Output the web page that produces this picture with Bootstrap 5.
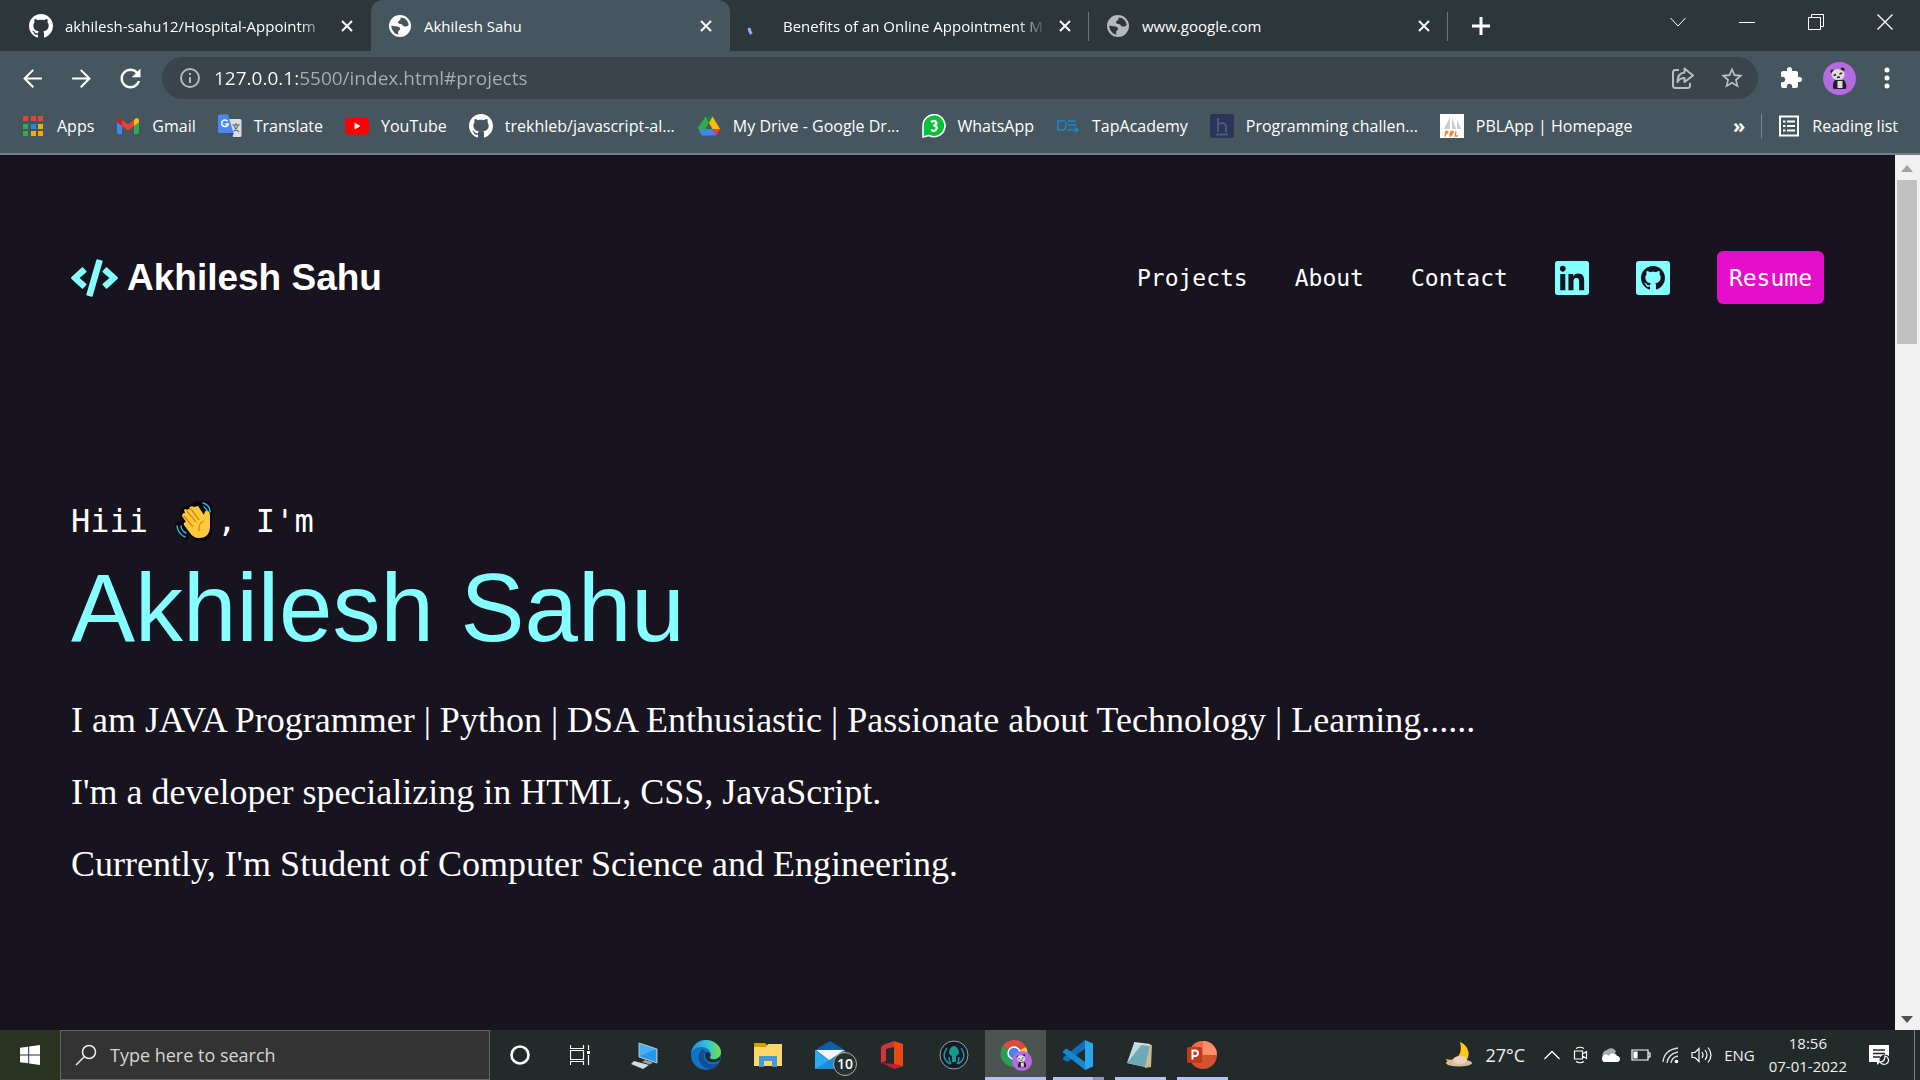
<!DOCTYPE html>
<html lang="en">
<head>
<meta charset="utf-8">
<meta name="viewport" content="width=device-width, initial-scale=1">
<title>Akhilesh Sahu</title>
<link href="https://cdn.jsdelivr.net/npm/bootstrap@5.3.0/dist/css/bootstrap.min.css" rel="stylesheet">
<style>
body{background:#17131f;font-family:"Open Sans","Noto Sans",sans-serif;font-size:15px;line-height:20px;color:#fff;overflow:hidden}
svg{display:block;flex:none}
a{color:inherit;text-decoration:none}
button{background:none;border:0;padding:0;color:inherit;font:inherit}
.tabstrip{background:#2c363b;height:51px;padding-left:12px}
.tab-item{flex:0 1 359px;min-width:0;padding:0 18px 0 17px;gap:12px;height:51px;position:relative}
.tab-item.current{background:#46565f;border-radius:12px 12px 0 0}
.tab-item.ruled::after{content:"";position:absolute;right:0;top:12px;height:29px;width:1px;background:#6c777d}
.tab-title{flex:1 1 0;overflow:hidden;white-space:nowrap}
.tab-title.faded{-webkit-mask-image:linear-gradient(90deg,#000 calc(100% - 30px),transparent);mask-image:linear-gradient(90deg,#000 calc(100% - 30px),transparent)}
.win-controls{gap:53px;padding-right:27px;height:44px}
.toolbar{background:#46565f;padding:6px 21px 6px 20px}
.nav-keys{gap:24px;padding-right:19px}
.omnibox{background:#39444b;border-radius:21px;height:42px;padding:0 13px 0 16px;gap:12px}
.address{flex:1 1 0;min-width:0;border:0;outline:0;padding:0;font-size:19px;line-height:28px;color:transparent;background:linear-gradient(90deg,#fff 84px,#a9afb3 84px);-webkit-background-clip:text;background-clip:text}
.tool-end{gap:19px;padding-left:22px}
.bookmarks{background:#46565f;height:50px;padding:0 22px 6px 21px;border-bottom:2px solid #727e84;font-size:16px}
.mark-item{gap:12px;white-space:nowrap}
.mark-list{gap:22px}
.rule-v{width:1px;height:24px;background:#7d888e}
.page-view{padding:96px 71px 0}
.mono-text{font-family:"DejaVu Sans Mono","Liberation Mono",monospace}
.site-name{font:bold 37px/44px "Liberation Sans",Arial,sans-serif;gap:9px}
.site-links{font-size:23px;line-height:29px;gap:47px}
.text-link{padding-top:2px}
.resume-btn,.resume-btn:hover{background:#e30fcb;color:#fff;border:0;border-radius:6px;padding:13px 12px 11px;font-size:23px;line-height:29px}
.hero{padding-top:193px}
.greeting{font-size:32px;line-height:48px;margin:0}
.hero-name{font:400 96px/110px "Liberation Sans",Arial,sans-serif;color:#85ffff;margin:8px 0 36px}
.hero p.intro{font:36px/42px "Liberation Serif","Times New Roman",serif;margin:0 0 30px}
.scroller{width:25px;background:#f1f1f1;padding:10px 3px 7px 2px}
.scroll-thumb{background:#c1c1c1;height:164px;width:100%;margin-top:8px}
.taskbar{background:#222b29;height:50px}
.start-btn{width:60px;height:50px;background:#2a3222}
.search-box{width:430px;height:50px;background:#333;border:1px solid #666;padding:0 14px;gap:13px}
.search-box input{background:none;border:0;outline:0;padding:0;color:#d5d5d5;font-size:18px;line-height:26px;flex:1 1 0;min-width:0}
.search-box input::placeholder{color:#d5d5d5;opacity:1}
.pinned{margin-left:3px}
.task-btn{width:62px;height:50px;position:relative}
.task-btn.sys-btn{width:60px}
.task-btn.open-app::after{content:"";position:absolute;left:6px;right:5px;bottom:0;height:3px;background:#b0c4f8}
.task-btn.front-app::before{content:"";position:absolute;inset:0 1px 0 0;background:#4b5351}
.task-btn.front-app::after{left:0;right:1px}
.task-btn.stacked::after{background:linear-gradient(90deg,#b0c4f8 40px,#8a97bb 40px)}
.task-btn svg{position:relative}
.mail-count{position:absolute;left:34px;top:22px;width:24px;height:24px;border:1px solid #aaa;border-radius:50%;background:#26302e;font-size:14px;font-weight:600;line-height:22px}
.tray{gap:11px;color:#f0f0f0}
.tray .temp{font-size:18px}
.more-icons{margin:0 2px 0 8px}
.clock{line-height:23px;text-align:center;margin:0 11px 0 3px}
.notices{margin-right:12px}
.show-desk{width:6px;height:50px;border-left:1px solid #7b8280}
</style>
<script src="https://cdn.jsdelivr.net/npm/bootstrap@5.3.0/dist/js/bootstrap.bundle.min.js" defer></script>
</head>
<body class="d-flex flex-column vh-100">
<svg width="0" height="0" class="position-absolute" aria-hidden="true">
<defs>
<symbol id="octo" viewBox="0 0 16 16"><path d="M8 0C3.58 0 0 3.58 0 8c0 3.54 2.29 6.53 5.47 7.59.4.07.55-.17.55-.38 0-.19-.01-.82-.01-1.49-2.01.37-2.53-.49-2.69-.94-.09-.23-.48-.94-.82-1.13-.28-.15-.68-.52-.01-.53.63-.01 1.08.58 1.23.82.72 1.21 1.87.87 2.33.66.07-.52.28-.87.51-1.07-1.78-.2-3.64-.89-3.64-3.95 0-.87.31-1.59.82-2.15-.08-.2-.36-1.02.08-2.12 0 0 .67-.21 2.2.82.64-.18 1.32-.27 2-.27s1.36.09 2 .27c1.53-1.04 2.2-.82 2.2-.82.44 1.1.16 1.92.08 2.12.51.56.82 1.27.82 2.15 0 3.07-1.87 3.75-3.65 3.95.29.25.54.73.54 1.48 0 1.07-.01 1.93-.01 2.2 0 .21.15.46.55.38A8.01 8.01 0 0 0 16 8c0-4.42-3.58-8-8-8z"/></symbol>
<symbol id="globe" viewBox="0 0 22 22"><path fill-rule="evenodd" d="M11 0a11 11 0 1 0 0 22 11 11 0 0 0 0-22zM11.500 2.500c4.500 0 7.800 3.500 8.200 7.500-2 2-5.200 2-6.200 0-1-1.800-4-.5-4.500-2.300C8.500 6 12.500 5.500 11.500 2.500zM2.300 10.500c2.500.8 6.200.3 8.200 2 1.500 1.500 0 2.500-1 3.500-.8 1-.3 2.500.2 3.700C5.500 19.200 2.300 15 2.300 10.500z"/></symbol>
<symbol id="cross" viewBox="0 0 12 12"><path d="M1 1l10 10M11 1L1 11" stroke="currentColor" stroke-width="2" fill="none"/></symbol>
<symbol id="panda" viewBox="0 0 33 33"><circle cx="16.500" cy="16.500" r="16.500" fill="#b56be0"/><path d="M12 18h9c3 4 2.500 9 1.500 9h-12c-1-2-1-6 1.500-9z" fill="#231f26"/><path d="M14.500 19h5v7h-5z" fill="#ddd"/><circle cx="9.500" cy="9.500" r="2" fill="#231f26"/><circle cx="19.500" cy="7.500" r="2" fill="#231f26"/><ellipse cx="15" cy="12.500" rx="6.500" ry="5.500" fill="#dcdcdc"/><path d="M10.500 13.500l2.500-1M16.500 12l2.500-1M14 15.500l3-.6" stroke="#231f26" stroke-width="1.500"/></symbol>
</defs></svg>

<header>
<nav class="tabstrip d-flex" aria-label="Open tabs">
<div class="tab-item d-flex align-items-center"><svg width="24" height="24" fill="#fff"><use href="#octo"/></svg><a class="tab-title faded" href="#">akhilesh-sahu12/Hospital-Appointm</a><button type="button" aria-label="Close tab"><svg width="12" height="12"><use href="#cross"/></svg></button></div>
<div class="tab-item current d-flex align-items-center"><svg width="24" height="22" fill="#fff"><use href="#globe"/></svg><a class="tab-title" href="#">Akhilesh Sahu</a><button type="button" aria-label="Close tab"><svg width="12" height="12"><use href="#cross"/></svg></button></div>
<div class="tab-item ruled d-flex align-items-center"><svg width="24" height="24" viewBox="0 0 24 24"><path d="M2 14q.5 3.500 2.500 6" stroke="#8ab4f8" stroke-width="3" fill="none"/></svg><a class="tab-title faded" href="#">Benefits of an Online Appointment M</a><button type="button" aria-label="Close tab"><svg width="12" height="12"><use href="#cross"/></svg></button></div>
<div class="tab-item ruled d-flex align-items-center"><svg width="24" height="22" fill="#b5b9bb"><use href="#globe"/></svg><a class="tab-title" href="#">www.google.com</a><button type="button" aria-label="Close tab"><svg width="12" height="12"><use href="#cross"/></svg></button></div>
<button type="button" class="ms-4" aria-label="New tab"><svg width="18" height="18" viewBox="0 0 18 18"><path d="M9 0v18M0 9h18" stroke="#fff" stroke-width="3"/></svg></button>
<div class="win-controls d-flex align-items-center ms-auto">
<button type="button" aria-label="Search tabs"><svg width="16" height="16" viewBox="0 0 16 16" fill="none" stroke="#fff"><path d="M.5 4l7.500 8 7.500-8"/></svg></button>
<button type="button" aria-label="Minimise"><svg width="16" height="16" viewBox="0 0 16 16" fill="none" stroke="#fff"><path d="M0 8.500h16"/></svg></button>
<button type="button" aria-label="Restore"><svg width="16" height="16" viewBox="0 0 16 16" fill="none" stroke="#fff"><path d="M.5 3.500h12v12H.5zM3.500 3.500v-3h12v12h-3"/></svg></button>
<button type="button" aria-label="Close"><svg width="16" height="16" viewBox="0 0 16 16" fill="none" stroke="#fff" stroke-width="1.300"><path d="M.5.5l15 15M15.500.5l-15 15"/></svg></button>
</div>
</nav>

<div class="toolbar d-flex align-items-center">
<div class="nav-keys d-flex">
<button type="button" aria-label="Back"><svg width="25" height="25" viewBox="0 0 24 24" fill="#fff"><path d="M21 11H6.830l6.590-6.590L12 3l-9 9 9 9 1.410-1.410L6.830 13H21v-2z"/></svg></button>
<button type="button" aria-label="Forward"><svg width="25" height="25" viewBox="0 0 24 24" fill="#fff"><path d="M3 11h14.170l-6.590-6.590L12 3l9 9-9 9-1.410-1.410L17.170 13H3v-2z"/></svg></button>
<button type="button" aria-label="Reload"><svg width="25" height="25" viewBox="2 2 20 20" fill="#fff"><path d="M17.650 6.350C16.200 4.900 14.210 4 12 4c-4.420 0-7.990 3.580-7.990 8s3.570 8 7.990 8c3.730 0 6.840-2.550 7.730-6h-2.080c-.82 2.330-3.040 4-5.650 4-3.310 0-6-2.690-6-6s2.690-6 6-6c1.660 0 3.140.69 4.220 1.780L13 11h7V4l-2.350 2.350z"/></svg></button>
</div>
<div class="omnibox d-flex align-items-center flex-grow-1">
<svg width="24" height="24" viewBox="0 0 24 24"><circle cx="12" cy="12" r="9" fill="none" stroke="#b3b9bc" stroke-width="2"/><path d="M11 11h2v6h-2zM11 7h2v2h-2z" fill="#b3b9bc"/></svg>
<input class="address" type="text" aria-label="Address" value="127.0.0.1:5500/index.html#projects">
<button type="button" aria-label="Share"><svg width="24" height="24" viewBox="0 0 24 24" fill="none" stroke="#b9bec1" stroke-width="2"><path d="M8 4H4.500Q2 4 2 6.500v13Q2 22 4.500 22h12q2.500 0 2.500-2.500V17" /><path d="M13.500 6.500v-4L22 9.500l-8.500 6.500v-4c-4 0-5.500 1-7 4C6.500 10.500 9 7 13.500 6.500z" stroke-linejoin="round"/></svg></button>
<button type="button" class="ms-2 ps-1" aria-label="Bookmark this tab"><svg width="26" height="26" viewBox="0 0 24 24" fill="#b9bec1"><path d="M22 9.240l-7.190-.62L12 2 9.190 8.630 2 9.240l5.460 4.730L5.820 21 12 17.270 18.180 21l-1.630-7.030L22 9.240zM12 15.400l-3.760 2.270 1-4.280-3.320-2.880 4.380-.38L12 6.100l1.710 4.040 4.380.38-3.320 2.880 1 4.280L12 15.400z"/></svg></button>
</div>
<div class="tool-end d-flex align-items-center">
<button type="button" aria-label="Extensions"><svg width="24" height="24" viewBox="1 0 24 24" fill="#fff"><path d="M20.500 11H19V7c0-1.100-.9-2-2-2h-4V3.500C13 2.120 11.880 1 10.500 1S8 2.120 8 3.500V5H4c-1.100 0-1.990.9-1.990 2v3.800H3.500c1.490 0 2.700 1.210 2.700 2.700s-1.210 2.700-2.700 2.700H2V20c0 1.100.9 2 2 2h3.800v-1.500c0-1.490 1.210-2.700 2.700-2.700 1.490 0 2.700 1.210 2.700 2.700V22H17c1.100 0 2-.9 2-2v-4h1.500c1.380 0 2.500-1.120 2.500-2.500S21.880 11 20.500 11z"/></svg></button>
<button type="button" aria-label="Profile"><svg width="33" height="33"><use href="#panda"/></svg></button>
<button type="button" aria-label="Menu"><svg width="24" height="24" viewBox="0 0 24 24" fill="#fff"><circle cx="12" cy="4" r="2.500"/><circle cx="12" cy="12" r="2.500"/><circle cx="12" cy="20" r="2.500"/></svg></button>
</div>
</div>

<nav class="bookmarks d-flex align-items-center" aria-label="Bookmarks">
<div class="mark-list d-flex align-items-center">
<a class="mark-item d-flex align-items-center" href="#"><svg width="24" height="24" viewBox="0 0 24 24"><path fill="#ea4335" d="M2 2h5v5H2zM10 2h5v5h-5zM17 2h5v5h-5z"/><path fill="#34a853" d="M2 10h5v5H2zM2 17h5v5H2z"/><path fill="#1e88e5" d="M10 10h5v5h-5z"/><path fill="#f9ab00" d="M17 10h5v5h-5zM10 17h5v5h-5zM17 17h5v5h-5z"/></svg>Apps</a>
<a class="mark-item d-flex align-items-center" href="#"><svg width="24" height="24" viewBox="0 0 24 24"><path fill="#4285f4" d="M1 8l5 3.500V20H2.500Q1 20 1 18.500z"/><path fill="#34a853" d="M23 8l-5 3.500V20h3.500Q23 20 23 18.500z"/><path fill="#ea4335" d="M6 6l6 4.500L18 6v6l-6 4.500L6 12z"/><path fill="#c5221f" d="M1 6.500C1 4 3.500 3.300 5 4.800L6 6v6L1 8.200z"/><path fill="#fbbc04" d="M23 6.500C23 4 20.500 3.300 19 4.800L18 6v6l5-3.800z"/></svg>Gmail</a>
<a class="mark-item d-flex align-items-center" href="#"><svg width="24" height="24" viewBox="0 0 24 24"><path fill="#dadce0" d="M11 5h11q1.500 0 1.500 1.500v15Q23.500 23 22 23h-7z"/><path d="M14.500 11h7M18 9v2M20 11c-1 4-3 5.500-4.500 6.500M16 12c1 3 2.500 4.500 5 6" stroke="#607d8b" stroke-width="1.300" fill="none"/><path fill="#3740ab" d="M11 19h5l-2.500 4z"/><path fill="#4a89f3" d="M1.500.5h8.500L15.500 19h-14Q0 19 0 17.500V2Q0 .5 1.500.5z"/><path d="M9.600 7.300A3.300 3.300 0 1 0 10.200 10H7.200" stroke="#fff" stroke-width="1.500" fill="none"/></svg>Translate</a>
<a class="mark-item d-flex align-items-center" href="#"><svg width="24" height="24" viewBox="0 0 24 24"><rect y="3.500" width="24" height="17" rx="4" fill="#f00"/><path d="M9.500 8.500v7l6-3.500z" fill="#fff"/></svg>YouTube</a>
<a class="mark-item d-flex align-items-center" href="#"><svg width="24" height="24" fill="#fff"><use href="#octo"/></svg>trekhleb/javascript-al...</a>
<a class="mark-item d-flex align-items-center" href="#"><svg width="24" height="24" viewBox="0 0 24 24"><path fill="#188038" d="M8.500 2.500h7L12 9z"/><path fill="#fbbc04" d="M15.500 2.500L23.200 15h-7.700L12 9z"/><path fill="#4285f4" d="M8.500 15h7l3.500 6.500H5z"/><path fill="#34a853" d="M.8 14l4.200 7.500L8.500 15 12 9 8.500 2.500z"/><path fill="#4285f4" d="M3 18l2 3.500L8.500 15H5z"/><path fill="#ea4335" d="M15.500 15h7.700L19 21.500z"/></svg>My Drive - Google Dr...</a>
<a class="mark-item d-flex align-items-center" href="#"><svg width="24" height="24" viewBox="0 0 24 24"><path d="M1 23V12A11 11 0 1 1 7 21.500z" fill="#09bf3c" stroke="#fff" stroke-width="1.600"/><path d="M9 8q3-2 5 0t-2.500 3.700Q16 12 14.500 15T9 16" stroke="#fff" stroke-width="2.200" fill="none"/></svg>WhatsApp</a>
<a class="mark-item d-flex align-items-center" href="#"><svg width="24" height="24" viewBox="0 0 24 24" fill="none" stroke="#1787d0" stroke-width="1.600"><path d="M1 7h8M2 7v9h5q3-1 3-5v-3M12 7h8M12 11h8M11 16h10M19 13.500l3 2.500-3 2"/></svg>TapAcademy</a>
<a class="mark-item d-flex align-items-center" href="#"><svg width="24" height="24" viewBox="0 0 24 24"><rect width="24" height="24" rx="2" fill="#2b3557"/><path d="M8 4v14M8 11q1-2 4-2t4 3v6M6 20.500h12" stroke="#4d5a77" stroke-width="2" fill="none"/></svg>Programming challen...</a>
<a class="mark-item d-flex align-items-center" href="#"><svg width="24" height="24" viewBox="0 0 24 24"><path fill="#fff" d="M0 0h24v24H0z"/><path fill="#c9cccf" d="M10 3v12H4zM12 3l4 12h-4zM17 6l4 9h-4z"/><path d="M5 22.500l1-5h1.500q1 1.500-1.800 2.500M10 22l1-4.500h2q1 1.500-2 2.200 2.500 1-1 2.500zM16 17.500l-1 4.500h3" stroke="#f58233" stroke-width="1.400" fill="none"/></svg>PBLApp | Homepage</a>
</div>
<button type="button" class="ms-auto fw-bold fs-5" aria-label="More bookmarks">»</button>
<span class="rule-v mx-3"></span>
<a class="mark-item d-flex align-items-center" href="#"><svg width="22" height="22" viewBox="0 0 22 22" fill="none" stroke="#fff"><path d="M2 1.500h18v19H2z" stroke-width="2"/><path d="M5 6.500h2.500M5 11h2.500M5 15.500h2.500M9 6.500h8M9 11h8M9 15.500h8" stroke-width="2"/></svg>Reading list</a>
</nav>
</header>

<div class="d-flex flex-grow-1">
<main class="page-view flex-grow-1">
<nav class="d-flex align-items-center justify-content-between">
<a class="site-name d-flex align-items-center" href="#"><svg width="47" height="38" viewBox="0 0 640 512" fill="#85ffff"><path d="M278.900 511.500l-61-17.700c-6.400-1.800-10-8.500-8.200-14.900L346.200 8.700c1.800-6.400 8.500-10 14.900-8.200l61 17.700c6.400 1.800 10 8.500 8.200 14.900L293.800 503.300c-1.900 6.400-8.500 10.100-14.900 8.200zM164.900 399.200l43.500-46.400c4.600-4.900 4.300-12.700-.8-17.200L117 256l90.600-79.700c5.100-4.500 5.500-12.300.8-17.200l-43.500-46.400c-4.500-4.800-12.100-5.100-17-.5L3.800 247.200c-5.100 4.700-5.100 12.800 0 17.500l144.100 135.100c4.900 4.600 12.500 4.400 17-.6zM492.100 399.900l144.100-135.100c5.100-4.700 5.100-12.800 0-17.500L492.100 112.100c-4.800-4.500-12.400-4.300-17 .5l-43.500 46.400c-4.600 4.900-4.300 12.700.8 17.200L523 256l-90.600 79.700c-5.100 4.500-5.500 12.300-.8 17.200l43.500 46.400c4.500 4.900 12.100 5.100 17 .6z"/></svg>Akhilesh Sahu</a>
<div class="site-links mono-text d-flex align-items-center">
<a class="text-link" href="#projects">Projects</a><a class="text-link" href="#about">About</a><a class="text-link" href="#contact">Contact</a>
<a href="#" aria-label="LinkedIn"><svg width="34" height="34" viewBox="0 32 448 448" fill="#85ffff"><path d="M416 32H31.900C14.300 32 0 46.500 0 64.300v383.400C0 465.500 14.300 480 31.900 480H416c17.600 0 32-14.500 32-32.300V64.300c0-17.800-14.400-32.300-32-32.300zM135.400 416H69V202.200h66.500V416zm-33.200-243c-21.300 0-38.500-17.300-38.500-38.500S80.900 96 102.200 96c21.200 0 38.500 17.300 38.500 38.500 0 21.300-17.200 38.500-38.500 38.500zm282.100 243h-66.400V312c0-24.800-.5-56.700-34.500-56.700-34.600 0-39.900 27-39.900 54.900V416h-66.400V202.200h63.700v29.200h.9c8.900-16.800 30.600-34.500 62.900-34.500 67.200 0 79.700 44.300 79.700 101.900V416z"/></svg></a>
<a href="#" aria-label="GitHub"><svg width="34" height="34" viewBox="0 0 34 34"><rect width="34" height="34" rx="3" fill="#85ffff"/><svg x="5" y="5" width="24" height="24" fill="#17131f"><use href="#octo"/></svg></svg></a>
<a class="btn resume-btn" href="#">Resume</a>
</div>
</nav>
<section class="hero">
<p class="greeting mono-text d-flex align-items-center"><span>Hiii&nbsp;</span><svg width="50" height="40" viewBox="-6 0 50 40"><path d="M16 6l8-4 8 2 2 6 3 4v17q-4 9-12 7L10 27 9 10z" fill="#080808" stroke="#080808" stroke-width="4" stroke-linejoin="round"/><path d="M30 2q7 2 7 9M5 24q1 8 8 12" stroke="#080808" stroke-width="6" fill="none" stroke-linecap="round"/><path d="M31 6q3 2 3 5M30 2q7 2 7 9M4 25q1 8 8 11M8 25q0 4 5 7" stroke="#2eb3e0" stroke-width="1.500" fill="none" stroke-linecap="round"/><path d="M14 9q2-2 4 0l-2-2q2-3 5-1l4-1 6 9q1-6 4-4 2 1 2 5v10q0 12-11 12-6 0-9-5l-6-8q-1-3 2-3l-4-6q0-3 3-3l-1-3q1-2 3 0z" fill="#ffc83d"/><path d="M14 10l9 11M18 8l8 11M11 15l9 11M31 20q-6 2-5 10" stroke="#d68a12" stroke-width="1.300" fill="none"/></svg><span>, I'm</span></p>
<h1 class="hero-name">Akhilesh Sahu</h1>
<p class="intro">I am JAVA Programmer | Python | DSA Enthusiastic | Passionate about Technology | Learning......</p>
<p class="intro">I'm a developer specializing in HTML, CSS, JavaScript.</p>
<p class="intro">Currently, I'm Student of Computer Science and Engineering.</p>
</section>
</main>
<div class="scroller d-flex flex-column align-items-center" aria-hidden="true">
<svg width="12" height="7" viewBox="0 0 12 7"><path d="M6 0l6 7H0z" fill="#a3a3a3"/></svg>
<div class="scroll-thumb"></div>
<svg class="mt-auto" width="12" height="7" viewBox="0 0 12 7"><path d="M6 7l6-7H0z" fill="#505050"/></svg>
</div>
</div>

<footer class="taskbar d-flex align-items-center">
<button type="button" class="start-btn d-flex align-items-center justify-content-center" aria-label="Start"><svg width="20" height="20" viewBox="0 0 20 20" fill="#fff"><path d="M0 2.800L8.200 1.700v7.800H0zM9.200 1.500L20 0v9.500H9.200zM0 10.500h8.200v7.800L0 17.200zM9.200 10.500H20V20L9.200 18.500z"/></svg></button>
<label class="search-box d-flex align-items-center"><svg width="22" height="22" viewBox="0 0 22 22" fill="none" stroke="#eee" stroke-width="1.500"><circle cx="14" cy="8" r="6.500"/><path d="M9.500 12.500L1 21"/></svg><input type="search" placeholder="Type here to search" aria-label="Search"></label>
<button type="button" class="task-btn sys-btn d-flex align-items-center justify-content-center" aria-label="Cortana"><svg width="20" height="20" viewBox="0 0 20 20"><circle cx="10" cy="10" r="8.500" fill="none" stroke="#fff" stroke-width="2.600"/></svg></button>
<button type="button" class="task-btn sys-btn d-flex align-items-center justify-content-center" aria-label="Task view"><svg width="20" height="20" viewBox="0 0 20 20" fill="none" stroke="#fff"><path d="M.5 0v3.500h13V0M.5 5.500h13v9H.5zM.5 20v-3.500h13V20M18.500 0v5M18.500 10v10" stroke-width="1.200"/><path d="M17 6h3v3h-3z" fill="#fff" stroke="none"/></svg></button>
<div class="pinned d-flex">
<button type="button" class="task-btn d-flex align-items-center justify-content-center" aria-label="This PC"><svg width="30" height="30" viewBox="0 0 30 30"><path d="M10 3l18 6v14L10 17z" fill="#45b0f5" stroke="#b9c4ca"/><path d="M11 16L27 9v13z" fill="#2b97ea"/><path d="M16 20l8 2.500-3 2-8-2.500z" fill="#9ba4a8"/><path d="M5 21l15 4-6 4-12-5z" fill="#d4d9db"/></svg></button>
<button type="button" class="task-btn d-flex align-items-center justify-content-center" aria-label="Edge"><svg width="30" height="30" viewBox="0 0 30 30"><defs><linearGradient id="eg" x1="0" x2="1"><stop offset="0" stop-color="#1f8fdc"/><stop offset=".5" stop-color="#2fc0dc"/><stop offset="1" stop-color="#6ee34c"/></linearGradient></defs><circle cx="15" cy="15" r="15" fill="#1173c7"/><path d="M0 14C1 5 7 0 15 0s15 6 15 12-5 8-10 7c-2-1-1-2-.5-3C21 12 17 7 10 7 5 7 1 10 0 14z" fill="url(#eg)"/><path d="M12 9c-5 3-6 10-2 15 3 4 8 6 13 4 2-1 4-3 5-5-6 3-14 1-15-6 0-3 1-4 2-5z" fill="#124d95"/><path d="M15.500 12c-3 3-1 9 4 10 3 .8 6 .2 9-1.500L30 14.500c-2 5-7 5.500-10 4.500-2-1-1-2-.5-3 .5-2-1-4-4-4z" fill="#222b29"/></svg></button>
<button type="button" class="task-btn d-flex align-items-center justify-content-center" aria-label="File Explorer"><svg width="28" height="24" viewBox="0 0 28 24"><path d="M0 0h11l3 3v4H0z" fill="#dd9b08"/><path d="M0 4h12l2-3h14v22H0z" fill="#ffd767"/><path d="M5 24V13h18v11h-5v-6h-8v6z" fill="#4199d8"/></svg></button>
<button type="button" class="task-btn d-flex align-items-center justify-content-center" aria-label="Mail"><svg width="30" height="28" viewBox="0 0 30 28"><path d="M0 9l15-9 15 9v5H0z" fill="#0f5ea8"/><path d="M1 9h28L15 20z" fill="#f5f5f5"/><path d="M0 9l15 11L30 9v19H0z" fill="#2dabf0"/><path d="M0 28L30 9v19z" fill="#1b8edb"/></svg><span class="mail-count">10</span></button>
<button type="button" class="task-btn d-flex align-items-center justify-content-center" aria-label="Office"><svg width="24" height="28" viewBox="0 0 24 28"><path d="M14 0l9 3v22l-9 3z" fill="#ea4a10"/><path d="M14 0v6L6 8v12l-5 2V8Q1 5 3 4z" fill="#d1333f"/><path d="M2 22l12 1 9 2-9 3z" fill="#c41c30"/></svg></button>
<button type="button" class="task-btn d-flex align-items-center justify-content-center" aria-label="GitKraken"><svg width="30" height="30" viewBox="0 0 30 30"><circle cx="15" cy="15" r="14" fill="#141a2b" stroke="#9ba0a4"/><path d="M15 6c3 0 5 4 5 7 0 2-3 2-3 4v5h-4v-5c0-2-3-2-3-4 0-3 2-7 5-7z" fill="#17998c"/><path d="M8 8q-7 10 3 16M22 8q7 10-3 16M10 17q0 4 2 7M20 17q0 4-2 7" stroke="#17998c" stroke-width="1.500" fill="none"/></svg></button>
<button type="button" class="task-btn open-app front-app d-flex align-items-center justify-content-center" aria-label="Chrome"><svg width="32" height="32" viewBox="0 0 32 32"><path d="M14 14L2.500 7.500A13.500 13.500 0 0 1 26 8z" fill="#e04a3e"/><path d="M14 14l12-6a13.500 13.500 0 0 1-12 20z" fill="#fccb3a"/><path d="M14 14l0 14A13.500 13.500 0 0 1 2.500 7.500z" fill="#2a9d52"/><circle cx="14" cy="14" r="6" fill="#4384ee" stroke="#fff" stroke-width="1.500"/><svg x="12" y="12" width="20" height="20"><use href="#panda"/></svg></svg></button>
<button type="button" class="task-btn open-app stacked d-flex align-items-center justify-content-center" aria-label="Visual Studio Code"><svg width="30" height="30" viewBox="0 0 30 30"><path d="M22 0v8.500L4.500 22 0 19.500v-2z" fill="#0f6fb5"/><path d="M0 11l3.500-2.500L22 22v8L0 12.500z" fill="#1787d0"/><path d="M22 0l8 3.500v23L22 30z" fill="#2ba5ee"/></svg></button>
<button type="button" class="task-btn open-app d-flex align-items-center justify-content-center" aria-label="Notepad"><svg width="28" height="28" viewBox="0 0 28 28"><path d="M9 2l17 2-1 22-6 1z" fill="#c9b98b"/><path d="M8 2l16 2-5 22L1 22z" fill="#b9e0e6"/><path d="M1 22L16 3l8 1-5 22z" fill="#6fa9b5"/><path d="M8 2l16 2" stroke="#ddd" stroke-width="2"/></svg></button>
<button type="button" class="task-btn open-app d-flex align-items-center justify-content-center" aria-label="PowerPoint"><svg width="30" height="28" viewBox="0 0 30 28"><circle cx="16" cy="14" r="14" fill="#d35230"/><path d="M16 0a14 14 0 0 0-14 14h14z" fill="#ed6c47"/><path d="M16 0a14 14 0 0 1 14 14H16z" fill="#ff8f6b"/><rect y="6" width="15" height="16" rx="1.500" fill="#c13b1b"/><path d="M5.500 18.500v-9h3q2.500.5 2.500 2.700t-2.500 2.700h-3" stroke="#fff" stroke-width="2" fill="none"/></svg></button>
</div>
<div class="tray d-flex align-items-center ms-auto">
<svg width="30" height="26" viewBox="0 0 30 26"><path d="M15 0c12 5 11 20 0 22-7 1-13-1-14-5 8 3 18-3 14-17z" fill="#fdc91c"/><ellipse cx="14" cy="21" rx="13" ry="3.500" fill="#d9bda0"/><ellipse cx="15" cy="18" rx="7" ry="4" fill="#ead4bd"/></svg>
<span class="temp">27°C</span>
<button type="button" class="more-icons" aria-label="Show hidden icons"><svg width="16" height="10" viewBox="0 0 16 10" fill="none" stroke="#fff" stroke-width="1.300"><path d="M.5 9L8 1.500 15.500 9"/></svg></button>
<svg width="16" height="18" viewBox="0 0 16 18" fill="none" stroke="#fff" stroke-width="1.200"><path d="M1.500 5h8v8h-8zM9.500 8l4-2.500v7l-4-2.500M3 2.500q4-2.500 8 0M3 15.500q4 2.500 8 0"/></svg>
<svg width="20" height="14" viewBox="0 0 20 14"><path d="M3 9a5 5 0 0 1 4-7c3-3 8-2 9 2l-6 5z" fill="#aaa"/><path d="M4 14a4 4 0 0 1 0-7c2-1 4 0 5 1 2-4 7-3 8 0 4 0 4 6 0 6z" fill="#fff"/></svg>
<svg width="20" height="12" viewBox="0 0 20 12" fill="none" stroke="#fff" stroke-width="1.200"><path d="M1 1h16v10H1zM17 4h2v4h-2"/><path d="M3 3h3v6H3z" fill="#fff"/></svg>
<svg width="18" height="18" viewBox="0 0 18 18" fill="none" stroke="#ddd" stroke-width="1.300"><path d="M1 16Q2 4 16 2M5 17Q6 8 16 6M9 17q1-6 7-7"/><circle cx="14.500" cy="15.500" r="1.800" fill="#fff" stroke="none"/></svg>
<svg width="22" height="18" viewBox="0 0 22 18" fill="none" stroke="#fff" stroke-width="1.200"><path d="M1 6.500h3l4-4v13l-4-4H1zM11 6q2 3 0 6M14 4q4 5 0 10M17 1.500q6 7.500 0 15"/></svg>
<span>ENG</span>
<div class="clock">18:56<br>07-01-2022</div>
<button type="button" class="notices" aria-label="Notifications"><svg width="22" height="22" viewBox="0 0 22 22"><path d="M0 1h20v17h-9l-3 3v-3H0z" fill="#fff"/><path d="M4 6h12M4 9.500h12M4 13h7" stroke="#222b29" stroke-width="1.300"/><circle cx="16" cy="16" r="5.500" fill="#222b29"/><path d="M16 12c4 1 5 6 1 8-3 1-5 0-6-2 4 0 5-3 5-6z" fill="none" stroke="#fff" stroke-width="1.200"/></svg></button>
<div class="show-desk"></div>
</div>
</footer>
</body>
</html>
